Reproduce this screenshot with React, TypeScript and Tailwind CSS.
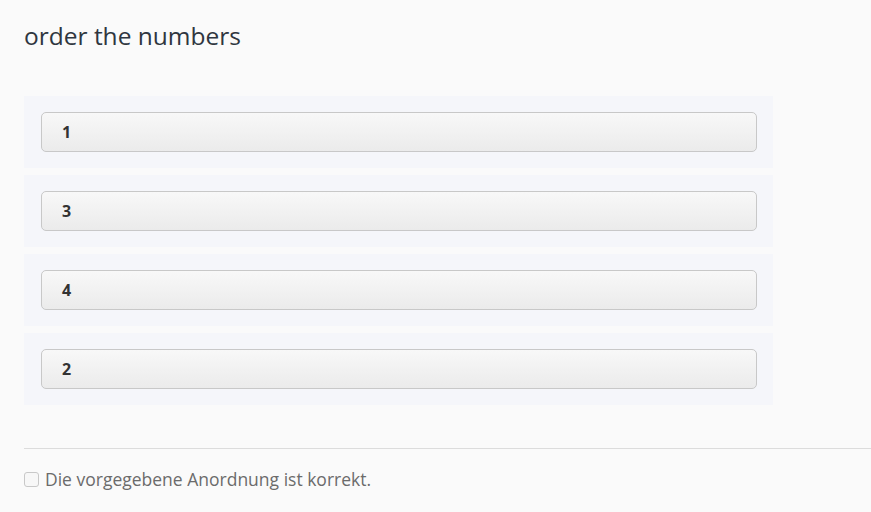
import React from 'react'

const items = ['1', '3', '4', '2']

export default function App() {
  return (
    <div className="min-h-[512px] w-full bg-[#fafafa] font-['Open_Sans',sans-serif]">
      <div className="pl-6 pt-[19px]">
        <h1 className="text-[24.5px] leading-[34px] text-[#2f3640]">order the numbers</h1>

        {/* Sortable list */}
        <div className="mt-[43px] flex w-[749px] flex-col gap-[7px]">
          {items.map((n) => (
            <div key={n} className="h-[72px] bg-[#f5f6fa] pl-[17px] pr-[16px] pt-4">
              <div className="flex h-[40px] items-center rounded-[5px] border border-[#c8c8c8] bg-gradient-to-b from-[#f8f8f8] to-[#ebebeb] px-5 text-[16px] font-bold text-[#333]">
                {n}
              </div>
            </div>
          ))}
        </div>

        <div className="mt-[43px] h-px bg-[#dcdcdc]" />

        <label className="mt-[17px] flex items-center gap-[6px] text-[17.5px] text-[#6b6b6b]">
          <span className="h-[15px] w-[15px] rounded-[3px] border border-[#c8c8c8] bg-[#f7f7f7]" />
          Die vorgegebene Anordnung ist korrekt.
        </label>
      </div>
    </div>
  )
}
